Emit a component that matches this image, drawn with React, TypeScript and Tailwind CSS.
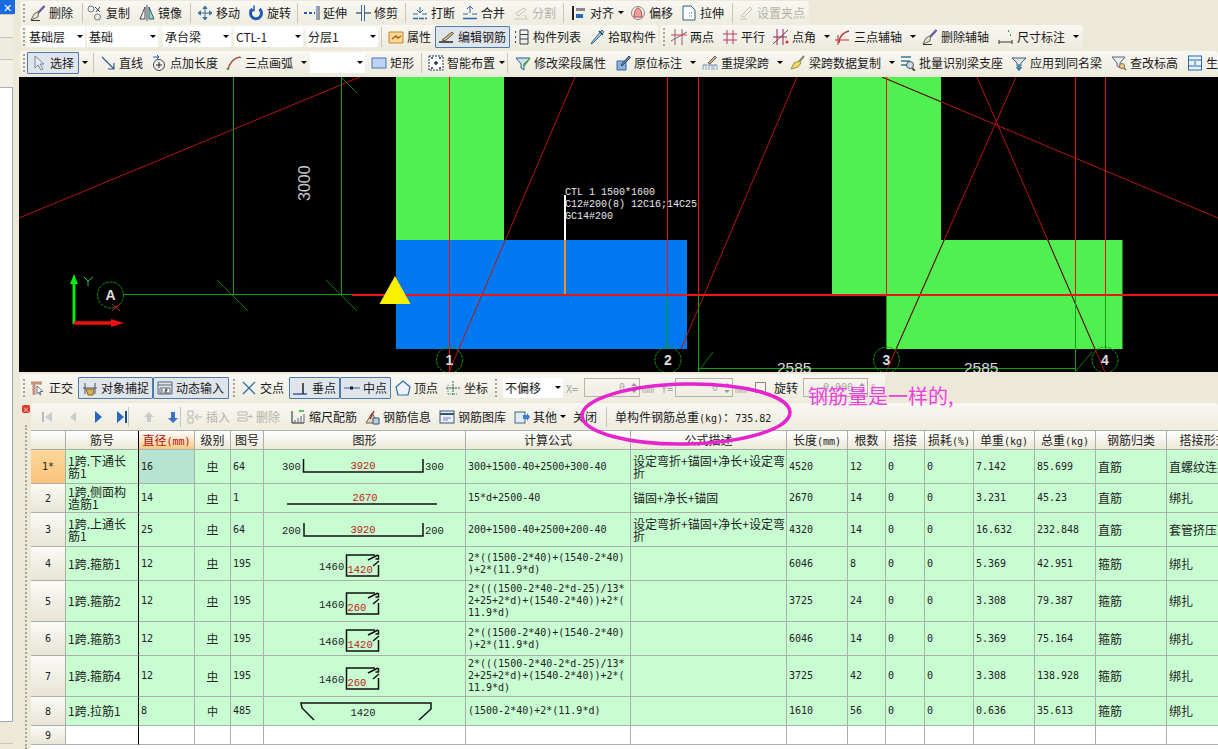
import React from "react";

const S = ({ children }: { children: React.ReactNode }) => (
  <svg viewBox="0 0 16 16" fill="none" className="w-4 h-4 shrink-0">{children}</svg>
);

const ic: Record<string, React.ReactNode> = {
  brush: <S><path d="M14.5 1 8 8" stroke="#6a5aa6" strokeWidth="2.4" /><path d="M8.5 6.5 4 9 1 15l7-3z" fill="#ece6c8" stroke="#666" strokeWidth="1" /><path d="M1 15.5h9" stroke="#333" /></S>,
  copy: <S><circle cx="4" cy="4" r="3" stroke="#68788c" /><circle cx="10.5" cy="12" r="3" stroke="#68788c" /><path d="M8 2l5 5M13 2 9 7" stroke="#444" /></S>,
  mirror: <S><path d="M6 2v12H1z" stroke="#445" /><path d="M8 0v16" stroke="#445" /><path d="M10 2v12h5z" fill="#9db" stroke="#357" /></S>,
  move: <S><path d="M8 1v14M1 8h14M8 1 6 3.5h4zM8 15l-2-2.500h4zM1 8l2.500-2v4zM15 8l-2.500-2v4z" stroke="#3a7296" fill="#6fa0c0" /></S>,
  rotate: <S><path d="M4.500 4a5.500 5.500 0 1 0 7 0" stroke="#2458b8" strokeWidth="3" /><path d="M6 .5v5H1.500" stroke="#2458b8" strokeWidth="1.500" /></S>,
  extend: <S><path d="M0 8h3M5 8h3" stroke="#2458b8" strokeWidth="2" /><path d="M10 8h1" stroke="#444" strokeWidth="2" /><path d="M13 1v14" stroke="#2458b8" strokeWidth="1" /><path d="M15 1v14" stroke="#444" /></S>,
  trim: <S><path d="M6.500 0v16M9.500 0v16" stroke="#3a6a96" /><path d="M1 8h5M10 8h6" stroke="#567" strokeWidth="1.500" /></S>,
  brk: <S><path d="M1 13.500h14" stroke="#2e6aa8" strokeWidth="1.500" strokeDasharray="5 1" /><path d="M1 9h5M10 9h5M8 2v5M5 5l3 3 3-3" stroke="#2e6aa8" /></S>,
  merge: <S><path d="M1 13.500h14" stroke="#2e6aa8" strokeWidth="1.500" /><path d="M1 9h5M10 9h5M8 8V2M5 4l3-3 3 3" stroke="#2e6aa8" /></S>,
  split: <S><path d="M1 14h14M3 8l8-5 2 2-8 6z" stroke="#c4c4b8" /><path d="M11 10l3 3" stroke="#c4c4b8" /></S>,
  align: <S><path d="M2 1v14" stroke="#222" strokeWidth="2" /><path d="M5 3h9v3H5z" fill="#888" /><path d="M5 9h7v4H5z" fill="#2a66b8" /></S>,
  offset: <S><ellipse cx="8" cy="8" rx="6.500" ry="6.500" stroke="#888" /><path d="M4 12c0-5 2-9 4-9s4 4 4 9z" fill="#f0a0a0" stroke="#b44" /></S>,
  stretch: <S><path d="M2 1h8l4 4v10H2z" stroke="#2e5a88" fill="#fff" /><path d="M8 8h4M8 11h4" stroke="#777" strokeDasharray="1 1" /></S>,
  grip: <S><path d="M2 14h7M3 11 12 2l2 2-8 8z" stroke="#c4c4b8" /></S>,
  prop: <S><path d="M1 3h14v11H1z" fill="#f8d890" stroke="#c08830" /><path d="M4 10l4-3 2 2 3-2" stroke="#a06020" strokeWidth="1.500" /></S>,
  edit: <S><path d="M0 13h14" stroke="#222" strokeWidth="1.500" /><path d="M3 11 13 3l1.500 1.500L6 12z" fill="#d8c070" stroke="#555" /></S>,
  list: <S><path d="M1 3h2M1 8h2M1 13h2" stroke="#345" strokeDasharray="1 1" strokeWidth="2" /><path d="M6 1h8v14H6zM6 5.500h8M6 10h8" stroke="#345" /></S>,
  pick: <S><path d="M13 1 7 8 3 13l-1 2 2-1 5-5 6-6z" fill="#9cc8e8" stroke="#3a6a90" /><path d="M10 2l4 4" stroke="#345" strokeWidth="1.500" /></S>,
  two: <S><path d="M4 0v16M11 0v16M0 12 16 3" stroke="#8a5a7a" /><path d="M0 6h16" stroke="#c44" /></S>,
  para: <S><path d="M5 1v14M11 1v14M1 5h14M1 11h14" stroke="#c03a6a" /></S>,
  ang: <S><path d="M4 0v16M10 0v16M0 15 15 1M0 8h14" stroke="#8a2a5a" /><circle cx="14" cy="13" r="1.500" fill="#e22" /></S>,
  arc3: <S><path d="M3 16V6M0 11h14" stroke="#d02a2a" /><path d="M4 14C4 7 9 3 14 2" stroke="#b04040" strokeWidth="1.500" /></S>,
  dim: <S><path d="M1 11v4M14 11v4M1 13h13" stroke="#333" /><path d="M10 2h2M12 6h2" stroke="#3a3" strokeWidth="2" strokeDasharray="1 1" /></S>,
  sel: <S><path d="M4 1v12l3-3 3 5 2-1-3-5h4z" fill="#e8edf4" stroke="#7888a0" /></S>,
  line: <S><path d="M2 2l12 12M14 8v6H8" stroke="#2f5f8f" strokeWidth="1.200" /></S>,
  ptlen: <S><circle cx="8" cy="10" r="5.500" stroke="#445" /><path d="M8 7v6M5 10h6" stroke="#223" /><path d="M2 2h6l-2-2M8 2 6 4" stroke="#2458b8" /></S>,
  arc: <S><path d="M2 15C3 8 8 3 14 2" stroke="#a85030" strokeWidth="1.500" /><path d="M2 15l-1-2M14 2l1 1" stroke="#3a6" strokeWidth="1.500" /></S>,
  rect: <S><rect x="1" y="3" width="14" height="10" fill="#bcd4f0" stroke="#4a78b0" /></S>,
  smart: <S><rect x="1" y="1" width="14" height="14" fill="#fff" stroke="#234" strokeDasharray="2 1" /><path d="M6 8h4M8 6v4M3 3h2M11 3h2M3 13h2M11 13h2" stroke="#234" strokeWidth="1.500" /></S>,
  modify: <S><path d="M1 3h14l-6 6v6l-3-2V9z" fill="#cde" stroke="#2f5f8f" /><path d="M9 11l6-8" stroke="#5a3" strokeWidth="1.500" /></S>,
  orig: <S><path d="M2 6h9v9H2z" fill="#8ab0dc" stroke="#3a6aa0" /><path d="M6 10l8-9 1.500 1.500L7 11z" fill="#5a8ac8" stroke="#345" /></S>,
  redo: <S><path d="M1 15v-5h3v5M7 15v-5h3v5M12 15v-5h3v5M1 10h14" stroke="#8aa4c0" /><path d="M6 8l7-7 1.500 1.500L8 9z" fill="#e0a070" stroke="#666" /></S>,
  copy2: <S><path d="M14 1 9 7" stroke="#886" strokeWidth="2" /><path d="M9 6 4 8 1 14l7-2 3-4z" fill="#f0d870" stroke="#a09030" /></S>,
  batch: <S><path d="M1 2h10M1 6h9M1 10h7" stroke="#3a7a9a" strokeWidth="1.500" /><circle cx="10" cy="10" r="3.500" fill="#cde" stroke="#456" /><path d="M12 13l3 3" stroke="#553" strokeWidth="2" /></S>,
  apply: <S><path d="M1 3h14l-5 5v3H6V8z" fill="#dde8f0" stroke="#456" /><path d="M8 9v5M5.500 12 8 15l2.500-3" stroke="#2a7ab0" strokeWidth="1.500" /></S>,
  lookup: <S><path d="M1 2h13l-5 6v5L6 11V8z" fill="#e4ecf0" stroke="#567" /><circle cx="11" cy="11" r="2.500" fill="#f4d090" stroke="#865" /><path d="M13 13l2 2" stroke="#853" strokeWidth="1.500" /></S>,
  gen: <S><rect x="1.500" y="1" width="13" height="14" fill="#e8f2fc" stroke="#2a6ab0" /><path d="M1.500 5h13M1.500 11h13M8 6v4" stroke="#2a6ab0" /></S>,
  ortho: <S><path d="M1 3h11M4 3v12" stroke="#c89080" strokeWidth="3" /><path d="M7 6v8l2-2 1 3 1-.5-1-3h3z" fill="#fff" stroke="#678" /></S>,
  snap: <S><path d="M1 8h14M3 3v11M13 3v11" stroke="#456" /><path d="M4 9h8l-1 6H6z" fill="#d8b040" stroke="#864" /></S>,
  input: <S><path d="M1 2h14v12H1zM1 5h14" stroke="#567" /><path d="M3 8h10v5H3z" fill="#fff" stroke="#567" /><path d="M5 9v3M8 9h2v1.500H8V12h2" stroke="#222" strokeWidth=".8" /></S>,
  cross: <S><path d="M2 2l12 12M14 2 2 14" stroke="#2f6fa8" strokeWidth="1.300" /></S>,
  perp: <S><path d="M0 14h14" stroke="#2f5f9f" strokeWidth="1.500" /><path d="M10 3v11" stroke="#222" strokeWidth="1.500" /></S>,
  mid: <S><path d="M0 8h16" stroke="#2f5f9f" /><rect x="6" y="6.500" width="3" height="3" fill="#123" /></S>,
  vertex: <S><path d="M8 1l7 6-2 8H3L1 7z" fill="#eef4fa" stroke="#2f6fa8" strokeWidth="1.200" /></S>,
  coord: <S><path d="M3 14V4M3 14h10" stroke="#2f7f8f" strokeDasharray="1 1" /><path d="M8 1v14M1 8h14" stroke="#456" strokeDasharray="2 1" /><circle cx="8" cy="8" r="1.500" fill="#3a3" /></S>,
  first: <S><path d="M4 3v10" stroke="#b8bcc0" strokeWidth="2" /><path d="M13 3 6 8l7 5z" fill="#c8ccd0" /></S>,
  prev: <S><path d="M11 3 5 8l6 5z" fill="#c8ccd0" /></S>,
  next: <S><path d="M5 2l7 6-7 6z" fill="#2468c0" /></S>,
  last: <S><path d="M3 2l7 6-7 6z" fill="#2468c0" /><path d="M12 2v12" stroke="#1a4a90" strokeWidth="2" /></S>,
  up: <S><path d="M8 3 3 8h3v5h4V8h3z" fill="#c8ccc8" /></S>,
  down: <S><path d="M8 14 3 9h3V3h4v6h3z" fill="#3a70c8" /></S>,
  ins: <S><path d="M1 2h5v5H1zM1 9h5v5H1z" stroke="#b8b8b0" /><path d="M15 8H8M11 5 8 8l3 3" stroke="#b8b8b0" /></S>,
  del: <S><path d="M1 3h9v3H1zM1 9h9v3H1z" stroke="#b8b8b0" /><path d="M10 7.500h5M13 5.500l2 2-2 2" stroke="#b8b8b0" /></S>,
  scale: <S><path d="M2 2v12h12" stroke="#222" /><path d="M5 14v-3M8 14V9M11 14V7M14 14V5" stroke="#567" /><path d="M9 2h5" stroke="#3a3" strokeWidth="1.500" /></S>,
  info: <S><path d="M2 14 8 4l6 10z" fill="#e0d8b0" stroke="#665" /><path d="M10 2l-4 8" stroke="#933" strokeWidth="1.500" /><path d="M9 9h6v6H9z" fill="#bcd" stroke="#357" /></S>,
  lib: <S><rect x="1" y="2" width="14" height="12" fill="#eef" stroke="#357" /><path d="M1 5h14" stroke="#357" strokeWidth="2" /><path d="M4 9h8M4 11h5" stroke="#789" /></S>,
  other: <S><rect x="1" y="3" width="10" height="11" fill="#e0ecf8" stroke="#468" /><path d="M9 6h4V4l3 4-3 4v-2H9z" fill="#3a80d0" /></S>,
};

const G = ({ c }: { c: string }) => (
  <div className={`${c} shrink-0 h-[18px] self-center`}>
    <div className="w-[2px] h-full border-l-2 border-dotted border-[#a8a696]" />
  </div>
);
const D = ({ c }: { c: string }) => (
  <div className={`${c} shrink-0 h-[20px]`}>
    <div className="w-[1px] h-full bg-[#c8c6b8]" />
  </div>
);
const Arrow = ({ c = "ml-[8px]" }: { c?: string }) => (
  <span className={`${c} w-0 h-0 shrink-0 border-x-[3px] border-x-transparent border-t-[3px] border-t-black`} />
);
const M = ({ children }: { children: React.ReactNode }) => (
  <span className="[font-family:'DejaVu_Sans_Mono',monospace] text-[10px]">{children}</span>
);

function T({ i, l, c, arr, off, box, am }: { i?: string; l?: React.ReactNode; c: string; arr?: boolean; off?: boolean; box?: boolean; am?: string }) {
  return (
    <div className={`${c} shrink-0 h-[22px] flex items-center whitespace-nowrap ${box ? "bg-[#e0e5ec] border border-[#4a7ab0] pl-[3px] rounded-[1px]" : ""} ${off ? "text-[#b4b4a8]" : ""}`}>
      {i && ic[i]}
      {l && <span className={i ? "ml-[3px]" : ""}>{l}</span>}
      {arr && <Arrow c={am} />}
    </div>
  );
}
function Drop({ l, c }: { l?: string; c: string }) {
  return (
    <div className={`${c} shrink-0 h-[20px] bg-white flex items-center justify-between pl-[2px] pr-[2px]`}>
      <span>{l}</span>
      <Arrow c="" />
    </div>
  );
}
function Spin({ c, v }: { c: string; v: string }) {
  return (
    <div className={`${c} shrink-0 h-[19px] border border-[#b4b4a8] flex items-center justify-end text-[#a8a89c]`}>
      <M>{v}</M>
      <div className="w-[11px] ml-[3px] flex flex-col items-center gap-[4px]">
        <span className="w-0 h-0 border-x-[3px] border-x-transparent border-b-[3px] border-b-[#999]" />
        <span className="w-0 h-0 border-x-[3px] border-x-transparent border-t-[3px] border-t-[#999]" />
      </div>
    </div>
  );
}

const diag: [number, number, number, number][] = [
  [19, 218, 360, 77],
  [575, 77, 449, 372],
  [797, 77, 681, 349],
  [882, 77, 1218, 218],
  [977, 77, 1105, 372],
  [1016, 77, 886, 372],
];
const Axis = ({ x, y, t }: { x: number; y: number; t: string }) => (
  <>
    <circle cx={x} cy={y} r="13" fill="none" stroke="#109a10" strokeWidth="1" strokeDasharray="3 1" />
    <text x={x} y={y + 5} textAnchor="middle" fontSize="14" fontWeight="700" fontFamily="Liberation Sans" fill="#ddd">{t}</text>
  </>
);

function Canvas() {
  return (
    <svg viewBox="19 77 1199 295" className="block w-[1199px] h-[295px] bg-black shrink-0">
      <defs>
        <clipPath id="gr">
          <path d="M396 77h108v163h-108zM832 77h109v163h181v109H886.500v-55H832z" />
        </clipPath>
      </defs>
      <path d="M396 77h108v163H396z" fill="#50f050" />
      <path d="M396 240h291v109H396z" fill="#0078f0" />
      <path d="M832 77h109v163h181.500v109H886.500v-55H832z" fill="#50f050" />
      {diag.map(([a, b, c, d], k) => (
        <line key={k} x1={a} y1={b} x2={c} y2={d} stroke="#b81414" strokeWidth="1" />
      ))}
      <g clipPath="url(#gr)">
        {diag.map(([a, b, c, d], k) => (
          <line key={k} x1={a} y1={b} x2={c} y2={d} stroke="#402010" strokeWidth="1" />
        ))}
      </g>
      <g shapeRendering="crispEdges">
        <path d="M233.500 77v217M341.500 77v217M123 294.500h229" stroke="#10a010" />
        <path d="M449.500 77v295M667.500 77v218M698.500 77v218M886.500 77v218M1075.500 77v218M1105.500 77v218" stroke="#e81010" />
        <path d="M667.500 295v54M698.500 295v77M886.500 295v54M1075.500 295v77M1105.500 295v54M698 368.500h377" stroke="#10a010" />
        <path d="M352 295h866" stroke="#e81818" strokeWidth="2" />
        <path d="M565 195v45" stroke="#fff" strokeWidth="2" />
        <path d="M565 240v54" stroke="#f09020" strokeWidth="2" />
      </g>
      <path d="M217 280l31 31M326 280l31 31M341 77l16 16M713 352l-15 20M1092 352l-17 20" stroke="#0a7a0a" />
      <g fontFamily="Liberation Mono" fontSize="10" fill="#e8e8e8">
        <text x="565" y="195">CTL 1 1500*1600</text>
        <text x="565" y="207">C12#200(8) 12C16;14C25</text>
        <text x="565" y="219">GC14#200</text>
      </g>
      <text x="0" y="0" transform="translate(310 201) rotate(-90)" fontSize="16" fontFamily="Liberation Sans" fill="#c8c8c8">3000</text>
      <text x="777" y="373" fontSize="15.500" fontFamily="Liberation Sans" fill="#d8d8d8">2585</text>
      <text x="964" y="373" fontSize="15.500" fontFamily="Liberation Sans" fill="#d8d8d8">2585</text>
      <Axis x={110.500} y={295} t="A" />
      <Axis x={449.500} y={360} t="1" />
      <Axis x={668} y={360} t="2" />
      <Axis x={886.500} y={360} t="3" />
      <Axis x={1105} y={360} t="4" />
      <path d="M112 304l8 7M120 304l-8 7" stroke="#c02020" />
      <path d="M395 276l-15.500 28h31z" fill="#f8f000" />
      <path d="M74 324v-44" stroke="#10e810" strokeWidth="3" />
      <path d="M74 274l-4 10h8z" fill="#10e810" />
      <path d="M74 323h37" stroke="#f01010" strokeWidth="3.500" />
      <path d="M124 323l-13-4v8z" fill="#f01010" />
      <path d="M84 277l4 4 5-4M88 281v5" stroke="#30c060" fill="none" />
    </svg>
  );
}

const Fig = ({ h, children }: { h: number; children: React.ReactNode }) => (
  <svg width="201" height={h} viewBox={`264 0 201 ${h}`} className="block" fontFamily="Liberation Mono" fontSize="10.500">
    {children}
  </svg>
);
const U = ({ lw, rw, a, b, y, t }: { lw: string; rw: string; a: number; b: number; y: number; t: string }) => (
  <>
    <text x="282" y={y + 4} fill="#222">{lw}</text>
    <path d={`M${a} ${y - 7}v13h${b - a}v-13`} fill="none" stroke="#111" strokeWidth="1.500" />
    <text x="363" y={y + 3} textAnchor="middle" fill="#c01818">{t}</text>
    <text x="425" y={y + 4} fill="#222">{rw}</text>
  </>
);
const Stir = ({ t, dy }: { t: string; dy: "a" | "b" }) => (
  <g transform={dy === "a" ? "translate(0 1)" : "translate(0 5)"}>
    <text x="319" y="22" fill="#222">1460</text>
    <path d="M375 7h-28.500v21h32v-11M378.500 7v4h-3" fill="none" stroke="#111" strokeWidth="1.500" />
    <path d="M368 12l10-5M373 18l6-5" stroke="#111" strokeWidth="1.500" />
    <text x="347.500" y="25" fill="#c01818">{t}</text>
  </g>
);

type Row = { n: string; h: string; fh: number; name: string; d: string; g: string; no: string; fig: React.ReactNode; f: string; desc: string; len: string; cnt: string; w1: string; w2: string; cat: string; lap: string };
const GR = "中";
const rows: Row[] = [
  { n: "1*", h: "h-[34px]", fh: 33, name: "1跨.下通长\n筋1", d: "16", g: GR, no: "64", fig: <U lw="300" rw="300" a={303.500} b={423} y={16} t="3920" />, f: "300+1500-40+2500+300-40", desc: "设定弯折+锚固+净长+设定弯\n折", len: "4520", cnt: "12", w1: "7.142", w2: "85.699", cat: "直筋", lap: "直螺纹连接" },
  { n: "2", h: "h-[29px]", fh: 28, name: "1跨.侧面构\n造筋1", d: "14", g: GR, no: "1", fig: <><text x="365" y="17" textAnchor="middle" fill="#c01818">2670</text><path d="M287 20h150" stroke="#111" strokeWidth="1.500" /></>, f: "15*d+2500-40", desc: "锚固+净长+锚固", len: "2670", cnt: "14", w1: "3.231", w2: "45.23", cat: "直筋", lap: "绑扎" },
  { n: "3", h: "h-[34px]", fh: 33, name: "1跨.上通长\n筋1", d: "25", g: GR, no: "64", fig: <U lw="200" rw="200" a={304} b={423} y={17} t="3920" />, f: "200+1500-40+2500+200-40", desc: "设定弯折+锚固+净长+设定弯\n折", len: "4320", cnt: "14", w1: "16.632", w2: "232.848", cat: "直筋", lap: "套管挤压" },
  { n: "4", h: "h-[34px]", fh: 33, name: "1跨.箍筋1", d: "12", g: GR, no: "195", fig: <Stir t="1420" dy="a" />, f: "2*((1500-2*40)+(1540-2*40)\n)+2*(11.9*d)", desc: "", len: "6046", cnt: "8", w1: "5.369", w2: "42.951", cat: "箍筋", lap: "绑扎" },
  { n: "5", h: "h-[41px]", fh: 40, name: "1跨.箍筋2", d: "12", g: GR, no: "195", fig: <Stir t="260" dy="b" />, f: "2*(((1500-2*40-2*d-25)/13*\n2+25+2*d)+(1540-2*40))+2*(\n11.9*d)", desc: "", len: "3725", cnt: "24", w1: "3.308", w2: "79.387", cat: "箍筋", lap: "绑扎" },
  { n: "6", h: "h-[34px]", fh: 33, name: "1跨.箍筋3", d: "12", g: GR, no: "195", fig: <Stir t="1420" dy="a" />, f: "2*((1500-2*40)+(1540-2*40)\n)+2*(11.9*d)", desc: "", len: "6046", cnt: "14", w1: "5.369", w2: "75.164", cat: "箍筋", lap: "绑扎" },
  { n: "7", h: "h-[41px]", fh: 40, name: "1跨.箍筋4", d: "12", g: GR, no: "195", fig: <Stir t="260" dy="b" />, f: "2*(((1500-2*40-2*d-25)/13*\n2+25+2*d)+(1540-2*40))+2*(\n11.9*d)", desc: "", len: "3725", cnt: "42", w1: "3.308", w2: "138.928", cat: "箍筋", lap: "绑扎" },
  { n: "8", h: "h-[29px]", fh: 28, name: "1跨.拉筋1", d: "8", g: "中x", no: "485", fig: <><path d="M419 23l12-11V6H301l1 5 12 12" fill="none" stroke="#111" strokeWidth="1.500" /><text x="363" y="19" textAnchor="middle" fill="#222">1420</text></>, f: "(1500-2*40)+2*(11.9*d)", desc: "", len: "1610", cnt: "56", w1: "0.636", w2: "35.613", cat: "箍筋", lap: "绑扎" },
];

const line = "border-r border-b border-[#a9b0a9]";
const mono = "[font-family:'DejaVu_Sans_Mono',monospace] text-[10px] whitespace-pre";
const cell = `${line} pl-[2px] p-0 align-middle leading-[12px]`;
const hd = `${line} p-0 text-center font-normal bg-gradient-to-b from-white to-[#ece9d8]`;
const rh = `${line} p-0 text-center bg-gradient-to-b from-[#fbfaf6] to-[#e8e5d6] ${mono}`;
const sep = "border-r-black";

function Table() {
  const widths = ["w-[35px]", "w-[73px]", "w-[56px]", "w-[36px]", "w-[33px]", "w-[202px]", "w-[165px]", "w-[156px]", "w-[61px]", "w-[38px]", "w-[39px]", "w-[49px]", "w-[61px]", "w-[61px]", "w-[71px]", "w-[74px]"];
  const heads: React.ReactNode[] = ["", "筋号", <span className="text-[#b01010]">直径<M>(mm)</M></span>, "级别", "图号", "图形", "计算公式", "公式描述", <>长度<M>(mm)</M></>, "根数", "搭接", <>损耗<M>(%)</M></>, <>单重<M>(kg)</M></>, <>总重<M>(kg)</M></>, "钢筋归类", "搭接形式"];
  return (
    <div className="flex-1 min-h-0 overflow-hidden bg-white border-t border-[#a9b0a9]">
      <table className="table-fixed border-separate border-spacing-0 w-[1210px] text-[12px] text-[#222]">
        <colgroup>{widths.map((w, i) => <col key={i} className={w} />)}</colgroup>
        <thead>
          <tr className="h-[19px]">
            {heads.map((h, i) => (
              <th key={i} className={`${hd} ${i === 1 ? sep : ""} ${i === 2 ? "from-[#fde4b0] to-[#f8c880]" : ""}`}>{h}</th>
            ))}
          </tr>
        </thead>
        <tbody>
          {rows.map((r, i) => (
            <tr key={r.n} className={`${r.h} bg-[#c7fdd1]`}>
              <td className={`${rh} ${i === 0 ? "from-[#fdd79a] to-[#f9c37a]" : ""}`}>{r.n}</td>
              <td className={`${cell} ${sep} whitespace-pre`}>{r.name}</td>
              <td className={`${cell} ${mono} ${i === 0 ? "bg-[#b6e3d2]" : ""}`}>{r.d}</td>
              <td className={`${line} p-0 text-center align-middle text-[11px]`}>
                {r.g === GR ? <span className="inline-block border-b border-[#222] leading-[10px]">中</span> : "中"}
              </td>
              <td className={`${cell} ${mono}`}>{r.no}</td>
              <td className={`${line} p-0 align-top`}><Fig h={r.fh}>{r.fig}</Fig></td>
              <td className={`${cell} ${mono}`}>{r.f}</td>
              <td className={`${cell} whitespace-pre`}>{r.desc}</td>
              <td className={`${cell} ${mono}`}>{r.len}</td>
              <td className={`${cell} ${mono}`}>{r.cnt}</td>
              <td className={`${cell} ${mono}`}>0</td>
              <td className={`${cell} ${mono}`}>0</td>
              <td className={`${cell} ${mono}`}>{r.w1}</td>
              <td className={`${cell} ${mono}`}>{r.w2}</td>
              <td className={`${cell} pl-[2px]`}>{r.cat}</td>
              <td className={`${cell} whitespace-nowrap`}>{r.lap}</td>
            </tr>
          ))}
          <tr className="h-[19px] bg-white">
            <td className={rh}>9</td>
            <td className={`${line} ${sep}`} />
            {widths.slice(2).map((w, i) => <td key={i} className={line} />)}
          </tr>
        </tbody>
      </table>
    </div>
  );
}

const strip = "flex items-center bg-gradient-to-b from-[#f8f7f2] to-[#eeecdf] rounded-[3px] shrink-0";

export default function App() {
  return (
    <div className="relative w-[1218px] h-[749px] overflow-hidden flex bg-[#ece9d8] text-[12px] text-[#1a1a1a] [font-family:'Noto_Sans_CJK_SC',sans-serif]">
      {/* left sidebar */}
      <div className="w-[19px] shrink-0 flex flex-col">
        <div className="w-[15px] h-[14px] bg-[#1a6ae0] flex items-center justify-center text-white text-[11px] leading-none">✕</div>
        <div className="w-[13px] h-[24px] bg-[#f1efe6] border-b border-t border-[#c8c6b4]" />
        <div className="w-[13px] h-[22px] bg-[#eeecde] border-b border-[#c8c6b4]" />
        <div className="w-[13px] h-[28px] bg-[#f1efe6] border-b border-[#a8b0c0]" />
        <div className="w-[13px] h-[634px] bg-white border-r border-b border-[#98a8c0]" />
        <div className="w-[13px] h-[22px] bg-[#ece9d8] border-b border-[#c8c6b4]" />
      </div>

      <div className="flex-1 min-w-0 flex flex-col">
        {/* toolbars */}
        <div className="h-[25px] flex items-center shrink-0">
          <div className={`${strip} h-[24px] w-[789px] ml-[1px] pl-[3px]`}>
            <G c="w-[7px]" />
            <T i="brush" l="删除" c="w-[52px]" />
            <D c="w-[5px]" />
            <T i="copy" l="复制" c="w-[52px]" />
            <T i="mirror" l="镜像" c="w-[51px]" />
            <D c="w-[7px]" />
            <T i="move" l="移动" c="w-[51px]" />
            <T i="rotate" l="旋转" c="w-[49px]" />
            <D c="w-[7px]" />
            <T i="extend" l="延伸" c="w-[51px]" />
            <T i="trim" l="修剪" c="w-[50px]" />
            <D c="w-[7px]" />
            <T i="brk" l="打断" c="w-[50px]" />
            <T i="merge" l="合并" c="w-[51px]" />
            <T i="split" l="分割" c="w-[50px]" off />
            <D c="w-[8px]" />
            <T i="align" l="对齐" c="w-[59px]" arr am="ml-[4px]" />
            <T i="offset" l="偏移" c="w-[51px]" />
            <T i="stretch" l="拉伸" c="w-[51px]" />
            <D c="w-[6px]" />
            <T i="grip" l="设置夹点" c="w-[70px]" off />
          </div>
        </div>
        <div className="h-[23px] flex items-center shrink-0 gap-[2px]">
          <div className={`${strip} h-[23px] w-[638px] ml-[1px] pl-[3px]`}>
            <G c="w-[4px]" />
            <Drop l="基础层" c="w-[58px]" />
            <Drop l="基础" c="w-[71px] ml-[2px]" />
            <Drop l="承台梁" c="w-[68px] ml-[5px]" />
            <Drop l="CTL-1" c="w-[69px] ml-[3px]" />
            <Drop l="分层1" c="w-[72px] ml-[3px]" />
            <D c="w-[7px] ml-[3px]" />
            <T i="prop" l="属性" c="w-[47px]" />
            <T i="edit" l="编辑钢筋" c="w-[75px]" box />
            <T i="list" l="构件列表" c="w-[75px] ml-[4px]" />
            <T i="pick" l="拾取构件" c="w-[68px]" />
          </div>
          <div className={`${strip} h-[23px] w-[423px] pl-[3px]`}>
            <G c="w-[8px]" />
            <T i="two" l="两点" c="w-[51px]" />
            <T i="para" l="平行" c="w-[51px]" />
            <T i="ang" l="点角" c="w-[62px]" arr />
            <T i="arc3" l="三点辅轴" c="w-[87px]" arr />
            <T i="brush" l="删除辅轴" c="w-[76px]" />
            <T i="dim" l="尺寸标注" c="w-[84px]" arr />
          </div>
        </div>
        <div className="h-[29px] flex items-center shrink-0">
          <div className={`${strip} h-[24px] w-[1198px] ml-[1px] pl-[3px] overflow-hidden`}>
            <G c="w-[4px]" />
            <T i="sel" l="选择" c="w-[52px]" box />
            <Arrow c="ml-[3px] mr-[5px]" />
            <D c="w-[7px]" />
            <T i="line" l="直线" c="w-[51px]" />
            <T i="ptlen" l="点加长度" c="w-[75px]" />
            <T i="arc" l="三点画弧" c="w-[84px]" arr />
            <Drop c="w-[55px]" />
            <T i="rect" l="矩形" c="w-[50px] ml-[6px]" />
            <D c="w-[7px]" />
            <T i="smart" l="智能布置" c="w-[79px]" arr am="ml-[4px]" />
            <D c="w-[8px]" />
            <T i="modify" l="修改梁段属性" c="w-[100px]" />
            <T i="orig" l="原位标注" c="w-[87px]" arr />
            <T i="redo" l="重提梁跨" c="w-[88px]" arr />
            <T i="copy2" l="梁跨数据复制" c="w-[110px]" arr />
            <T i="batch" l="批量识别梁支座" c="w-[111px]" />
            <T i="apply" l="应用到同名梁" c="w-[100px]" />
            <T i="lookup" l="查改标高" c="w-[76px]" />
            <T i="gen" l="生成" c="w-[50px]" />
          </div>
        </div>

        <Canvas />

        {/* snap toolbar */}
        <div className="h-[31px] flex items-center shrink-0">
          <div className={`${strip} h-[27px] w-[865px] ml-[1px] pl-[3px]`}>
            <G c="w-[7px]" />
            <T i="ortho" l="正交" c="w-[48px]" />
            <T i="snap" l="对象捕捉" c="w-[75px]" box />
            <T i="input" l="动态输入" c="w-[76px]" box />
            <G c="w-[8px] ml-[4px]" />
            <T i="cross" l="交点" c="w-[48px]" />
            <T i="perp" l="垂点" c="w-[51px]" box />
            <T i="mid" l="中点" c="w-[51px]" box />
            <T i="vertex" l="顶点" c="w-[50px] ml-[4px]" />
            <T i="coord" l="坐标" c="w-[50px]" />
            <G c="w-[8px]" />
            <Drop l="不偏移" c="w-[60px]" />
            <span className="w-[21px] pl-[3px] shrink-0 text-[#a8a89c]"><M>X=</M></span>
            <Spin c="w-[56px]" v="0" />
            <span className="w-[21px] pl-[2px] shrink-0 text-[#a8a89c]"><M>mm</M></span>
            <span className="w-[14px] shrink-0 text-[#a8a89c]"><M>Y=</M></span>
            <Spin c="w-[58px]" v="0" />
            <span className="w-[22px] pl-[2px] shrink-0 text-[#a8a89c]"><M>mm</M></span>
            <span className="w-[11px] h-[11px] border border-[#8a8a80] bg-[#f4f3ec] shrink-0" />
            <span className="w-[24px] ml-[8px] shrink-0 whitespace-nowrap">旋转</span>
            <Spin c="w-[65px] ml-[5px]" v="0.000" />
            <span className="ml-[3px] text-[#a8a89c]">°</span>
          </div>
        </div>

        {/* lower area */}
        <div className="flex-1 min-h-0 flex">
          <div className="w-[12px] shrink-0 flex flex-col items-start pl-[3px] pt-[2px]">
            <div className="w-[8px] h-[8px] rounded-[2px] bg-[#d83a2a] flex items-center justify-center text-white text-[7px] leading-none">×</div>
            <div className="ml-[3px] mt-[12px] flex-1 border-l-2 border-dotted border-[#a8a696]" />
          </div>
          <div className="flex-1 min-w-0 flex flex-col">
            <div className={`${strip} h-[27px] pl-[8px]`}>
              <T i="first" c="w-[26px]" />
              <T i="prev" c="w-[25px]" />
              <T i="next" c="w-[24px]" />
              <T i="last" c="w-[14px]" />
              <D c="w-[13px]" />
              <T i="up" c="w-[24px]" />
              <T i="down" c="w-[15px]" />
              <D c="w-[7px]" />
              <T i="ins" l="插入" c="w-[50px]" off />
              <T i="del" l="删除" c="w-[53px]" off />
              <T i="scale" l="缩尺配筋" c="w-[74px]" />
              <T i="info" l="钢筋信息" c="w-[75px]" />
              <T i="lib" l="钢筋图库" c="w-[75px]" />
              <T i="other" l="其他" c="w-[59px]" arr am="ml-[3px]" />
              <T l="关闭" c="w-[33px]" />
              <D c="w-[9px]" />
              <span className="whitespace-nowrap">单构件钢筋总重<M>(kg)</M>：<M>735.82</M></span>
            </div>
            <Table />
          </div>
        </div>
      </div>

      {/* annotation overlay */}
      <svg className="absolute left-[570px] top-[375px] w-[232px] h-[80px] pointer-events-none" viewBox="570 375 232 80" fill="none">
        <ellipse cx="686" cy="414" rx="104" ry="30" stroke="#e524cf" strokeWidth="3.500" transform="rotate(-1 686 414)" />
      </svg>
      <div className="absolute left-[808px] top-[384px] text-[20px] leading-[24px] text-[#ee3fe0] whitespace-nowrap">钢筋量是一样的,</div>
    </div>
  );
}
